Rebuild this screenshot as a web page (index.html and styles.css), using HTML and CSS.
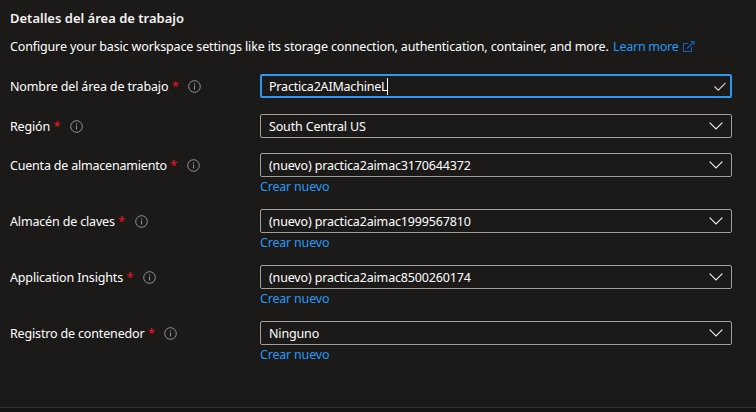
FILE: index.html
```html
<!DOCTYPE html>
<html lang="es">
<head>
<meta charset="utf-8">
<title>Detalles del área de trabajo</title>
<link rel="stylesheet" href="styles.css">
</head>
<body>
<svg class="defs" aria-hidden="true">
  <symbol id="info" viewBox="0 0 13 13"><circle cx="6.5" cy="6.5" r="5.8" fill="none" stroke="currentColor"/><path d="M6.5 5.5v4M6.5 3.3v1.2" fill="none" stroke="currentColor"/></symbol>
  <symbol id="chevron" viewBox="0 0 14 8"><path d="M.7.7 7 7 13.3.7" fill="none" stroke="currentColor" stroke-width="1.1"/></symbol>
  <symbol id="check" viewBox="0 0 12 9"><path d="M.5 4.5 4.3 8.2 11.6.8" fill="none" stroke="currentColor" stroke-width="1.2"/></symbol>
  <symbol id="external" viewBox="0 0 12 11"><path d="M5 2.500H.5v8h8V6M4 7.500l7-7M7.500.5h3.500v3.500" fill="none" stroke="currentColor" stroke-width="1.150"/></symbol>
</svg>
<main class="panel">
  <h1 class="title">Detalles del área de trabajo</h1>
  <p class="intro"><span class="copy">Configure your basic workspace settings like its storage connection, authentication, container, and more.</span><a class="link learn">Learn more</a><svg class="external"><use href="#external"/></svg></p>
  <form class="form">
    <div class="row name">
      <div class="label"><span class="caption workspace">Nombre del área de trabajo</span><span class="required">*</span><svg class="info"><use href="#info"/></svg></div>
      <div class="control"><div class="box focused"><span class="value machine">Practica2AIMachineL</span><i class="caret"></i><svg class="check"><use href="#check"/></svg></div></div>
    </div>
    <div class="row region">
      <div class="label"><span class="caption">Región</span><span class="required">*</span><svg class="info"><use href="#info"/></svg></div>
      <div class="control"><div class="box"><span class="value">South Central US</span><svg class="chevron"><use href="#chevron"/></svg></div></div>
    </div>
    <div class="row">
      <div class="label"><span class="caption storage">Cuenta de almacenamiento</span><span class="required">*</span><svg class="info"><use href="#info"/></svg></div>
      <div class="control"><div class="box"><span class="value">(nuevo) practica2aimac3170644372</span><svg class="chevron"><use href="#chevron"/></svg></div><a class="link create">Crear nuevo</a></div>
    </div>
    <div class="row">
      <div class="label"><span class="caption">Almacén de claves</span><span class="required">*</span><svg class="info"><use href="#info"/></svg></div>
      <div class="control"><div class="box"><span class="value">(nuevo) practica2aimac1999567810</span><svg class="chevron"><use href="#chevron"/></svg></div><a class="link create">Crear nuevo</a></div>
    </div>
    <div class="row">
      <div class="label"><span class="caption">Application Insights</span><span class="required">*</span><svg class="info"><use href="#info"/></svg></div>
      <div class="control"><div class="box"><span class="value">(nuevo) practica2aimac8500260174</span><svg class="chevron"><use href="#chevron"/></svg></div><a class="link create">Crear nuevo</a></div>
    </div>
    <div class="row">
      <div class="label"><span class="caption">Registro de contenedor</span><span class="required">*</span><svg class="info"><use href="#info"/></svg></div>
      <div class="control"><div class="box"><span class="value">Ninguno</span><svg class="chevron"><use href="#chevron"/></svg></div><a class="link create">Crear nuevo</a></div>
    </div>
  </form>
</main>
<footer class="footer"></footer>
</body>
</html>
```
FILE: styles.css
```css
* { box-sizing: border-box; }
body { margin: 0; height: 412px; overflow: hidden; display: flex; flex-direction: column; background: #1b1a19; color: #fff; font: 12.5px/18px "Noto Sans", sans-serif; letter-spacing: -0.16px; white-space: nowrap; }
svg { flex: none; }
.defs { position: absolute; width: 0; height: 0; }
.panel { flex: 1; padding: 9px 24px 0 10px; }
.title { margin: 0; font-size: 13px; line-height: 18px; font-weight: 600; letter-spacing: 0; color: #f3f2f1; }
.intro { display: flex; align-items: center; margin: 10px 0 18px; height: 19px; }
.copy { letter-spacing: -0.144px; }
.learn { margin-left: 4.5px; letter-spacing: -0.25px; }
.link { color: #2899f5; }
.external { width: 12px; height: 11px; margin-left: 4px; color: #1160b7; }
.row { display: flex; height: 56px; }
.row.name { height: 40px; }
.row.region { height: 39px; }
.label { display: flex; align-items: center; width: 250px; height: 24px; }
.caption, .value, .required { padding-top: 2px; line-height: 18px; }
.workspace { letter-spacing: -0.14px; }
.storage { letter-spacing: -0.2px; }
.required { width: 6px; margin-left: 3.5px; color: #e81123; font-weight: 500; }
.info { width: 13px; height: 13px; margin-left: 10.5px; color: #979593; }
.control { flex: 1; }
.box { display: flex; align-items: center; height: 24px; padding: 0 8px; border: 1px solid #a19f9d; border-radius: 2px; }
.box.focused { border: 2px solid #2899f5; padding: 0 4px 0 7px; }
.machine { letter-spacing: -0.2px; }
.caret { width: 1px; height: 17px; background: #fff; }
.chevron { width: 14px; height: 8px; margin-left: auto; color: #f3f2f1; }
.check { width: 12px; height: 9px; margin-left: auto; color: #d2d0ce; }
.create { display: block; line-height: 18px; margin-top: 1px; letter-spacing: -0.2px; }
.footer { height: 5px; border-top: 1px solid #323130; background: #161514; }
```
